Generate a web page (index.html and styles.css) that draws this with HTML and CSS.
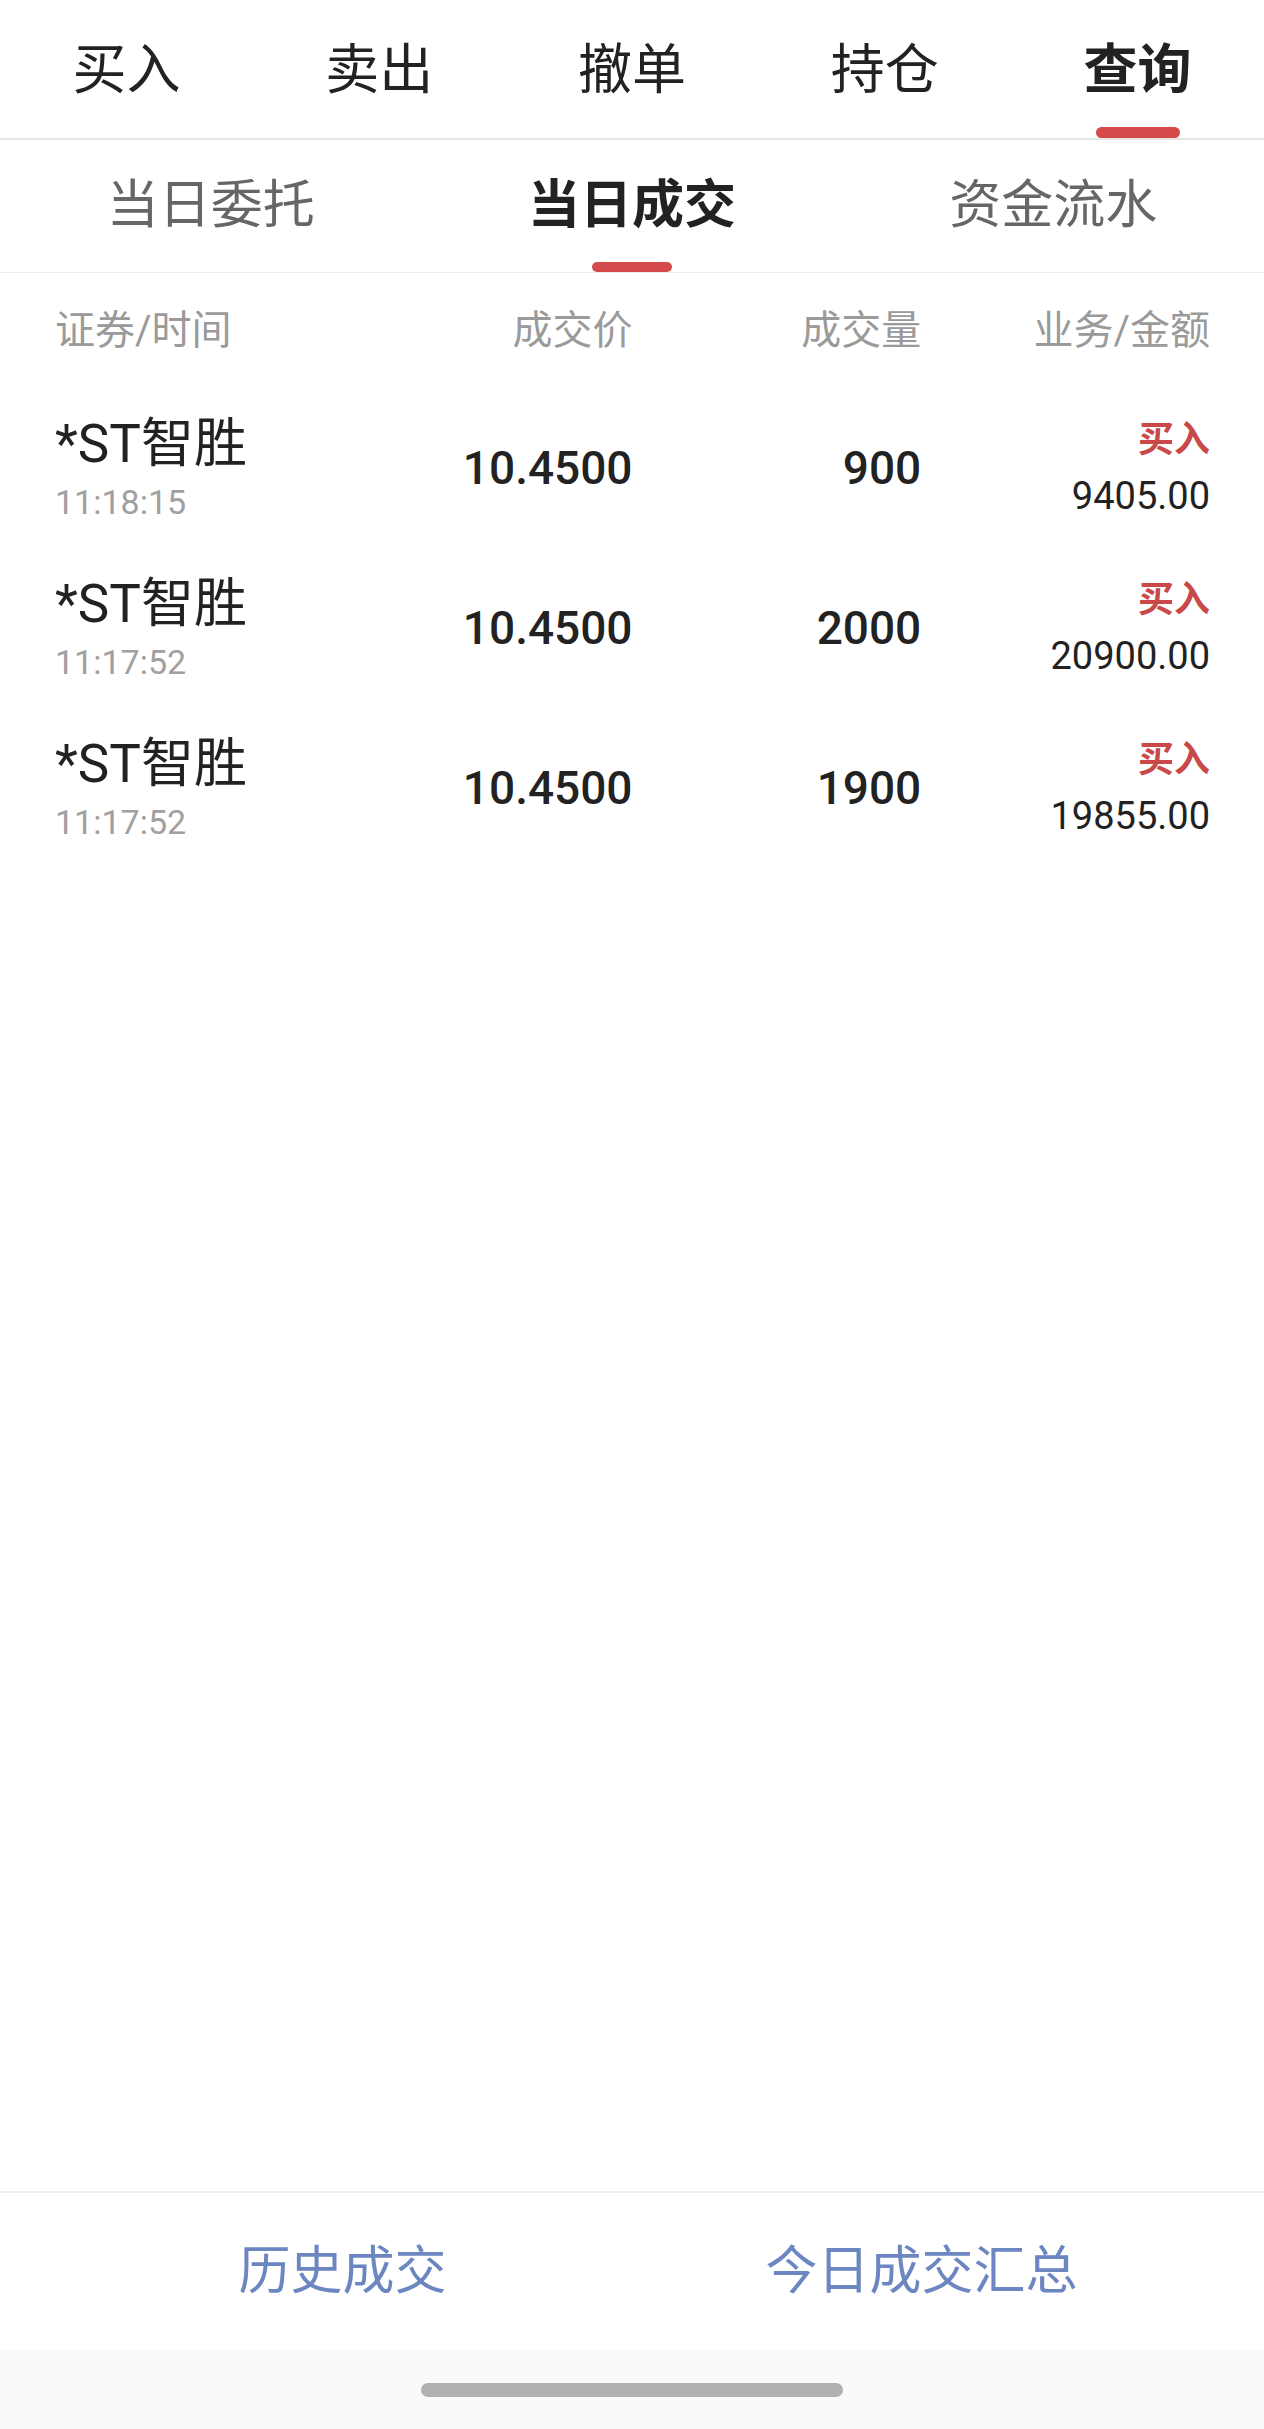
FILE: index.html
```html
<!DOCTYPE html>
<html lang="zh-CN">
<head>
<meta charset="utf-8">
<title>当日成交</title>
<link rel="stylesheet" href="styles.css">
</head>
<body>
<div class="app">
  <nav class="topnav">
    <div class="tab"><span class="tab-label">买入</span></div>
    <div class="tab"><span class="tab-label">卖出</span></div>
    <div class="tab"><span class="tab-label">撤单</span></div>
    <div class="tab"><span class="tab-label">持仓</span></div>
    <div class="tab active"><span class="tab-label">查询</span><span class="indicator"></span></div>
  </nav>
  <nav class="subnav">
    <div class="subtab"><span class="subtab-label">当日委托</span></div>
    <div class="subtab active"><span class="subtab-label">当日成交</span><span class="indicator sub"></span></div>
    <div class="subtab"><span class="subtab-label">资金流水</span></div>
  </nav>
  <main class="content">
    <div class="grid head">
      <div class="cell left">证券/时间</div>
      <div class="cell">成交价</div>
      <div class="cell">成交量</div>
      <div class="cell">业务/金额</div>
    </div>
    <div class="grid row">
      <div class="cell left stack">
        <span class="name">*ST智胜</span>
        <span class="time">11:18:15</span>
      </div>
      <div class="cell num">10.4500</div>
      <div class="cell num">900</div>
      <div class="cell stack right">
        <span class="biz">买入</span>
        <span class="amount">9405.00</span>
      </div>
    </div>
    <div class="grid row">
      <div class="cell left stack">
        <span class="name">*ST智胜</span>
        <span class="time">11:17:52</span>
      </div>
      <div class="cell num">10.4500</div>
      <div class="cell num">2000</div>
      <div class="cell stack right">
        <span class="biz">买入</span>
        <span class="amount">20900.00</span>
      </div>
    </div>
    <div class="grid row">
      <div class="cell left stack">
        <span class="name">*ST智胜</span>
        <span class="time">11:17:52</span>
      </div>
      <div class="cell num">10.4500</div>
      <div class="cell num">1900</div>
      <div class="cell stack right">
        <span class="biz">买入</span>
        <span class="amount">19855.00</span>
      </div>
    </div>
  </main>
  <footer class="bottombar">
    <div class="link">历史成交</div>
    <div class="link">今日成交汇总</div>
  </footer>
  <div class="homearea"><span class="homebar"></span></div>
</div>
</body>
</html>
```

FILE: styles.css
```css
* { box-sizing: border-box; }
html, body { margin: 0; padding: 0; background: #ffffff; }
body {
  font-family: Roboto, "Noto Sans CJK SC", "Noto Sans", sans-serif;
  color: #222222;
}
.app {
  width: 1264px;
  height: 100vh;
  display: flex;
  flex-direction: column;
}

/* top nav */
.topnav {
  display: grid;
  grid-template-columns: repeat(5, 1fr);
  height: 140px;
  border-bottom: 2px solid #e6e6e6;
}
.tab {
  display: flex;
  flex-direction: column;
  align-items: center;
}
.tab-label {
  margin-top: 44px;
  font-size: 54px;
  line-height: 54px;
  color: #222222;
}
.tab.active .tab-label { font-weight: 700; }
.indicator {
  margin-top: auto;
  width: 84px;
  height: 11px;
  border-radius: 6px;
  background: #d44a4a;
}
.indicator.sub {
  width: 80px;
  height: 10px;
  border-radius: 5px;
}

/* sub nav */
.subnav {
  display: grid;
  grid-template-columns: repeat(3, 1fr);
  height: 133px;
  border-bottom: 1px solid #ededed;
}
.subtab {
  display: flex;
  flex-direction: column;
  align-items: center;
}
.subtab-label {
  margin-top: 40px;
  font-size: 52px;
  line-height: 52px;
  color: #666666;
}
.subtab.active .subtab-label { font-weight: 700; color: #222222; }

/* table */
.content { flex: 1; }
.grid {
  display: grid;
  grid-template-columns: repeat(4, 1fr);
  padding: 0 54px 0 55px;
  align-items: center;
}
.cell { text-align: right; }
.cell.left { text-align: left; }
.head {
  height: 115px;
  font-size: 40px;
  line-height: 42px;
  color: #9a9a9a;
}
.row { height: 160px; }
.stack { display: flex; flex-direction: column; }
.stack.right { align-items: flex-end; }
.name {
  font-size: 53px;
  line-height: 56px;
  color: #222222;
}
.time {
  margin-top: 12px;
  font-size: 34px;
  line-height: 36px;
  color: #a0a0a0;
}
.num {
  font-size: 46px;
  line-height: 46px;
  color: #222222;
  font-weight: 500;
}
.biz {
  font-size: 36px;
  line-height: 40px;
  font-weight: 700;
  color: #c9484a;
}
.amount {
  margin-top: 16px;
  font-size: 38px;
  line-height: 40px;
  color: #222222;
}

/* bottom */
.bottombar {
  display: grid;
  grid-template-columns: 1fr 1fr;
  padding: 0 53px;
  height: 159px;
  border-top: 2px solid #eeeeee;
  align-items: center;
}
.link {
  text-align: center;
  font-size: 52px;
  line-height: 56px;
  color: #6b86c0;
}
.homearea {
  height: 79px;
  background: #fafafa;
  display: flex;
  align-items: center;
  justify-content: center;
}
.homebar {
  width: 422px;
  height: 14px;
  border-radius: 7px;
  background: #b0b0b0;
}
```
